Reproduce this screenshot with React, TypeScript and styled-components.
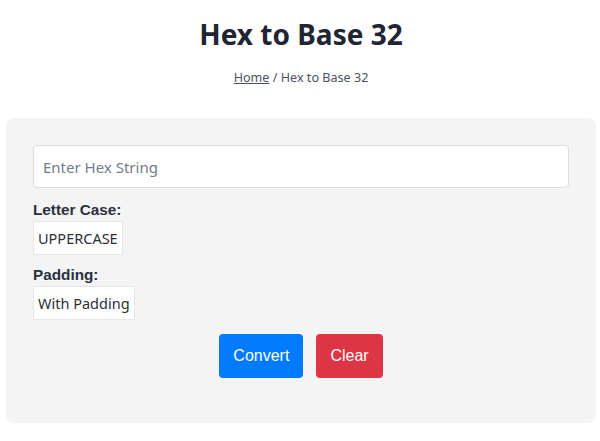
import React from "react";
import styled, { createGlobalStyle } from "styled-components";

const Global = createGlobalStyle`
  html, body { margin: 0; padding: 0; background: #ffffff; }
  body { font-family: "Noto Sans", "Open Sans", sans-serif; }
  * { box-sizing: border-box; }
`;

const Page = styled.div`
  width: 600px;
  padding: 0 4px 0 6px;
`;

const Header = styled.header`
  display: flex;
  flex-direction: column;
  align-items: center;
  padding-top: 14px;
`;

const Title = styled.h1`
  margin: 0;
  font-family: "Noto Sans", sans-serif;
  font-size: 28px;
  line-height: 40px;
  font-weight: 700;
  color: #1f2533;
`;

const Crumbs = styled.nav`
  margin-top: 15px;
  font-family: "Noto Sans", sans-serif;
  font-size: 12.6px;
  line-height: 18px;
  color: #4a5160;
`;

const CrumbLink = styled.a`
  color: #4a5160;
  text-decoration: underline;
`;

const Card = styled.section`
  margin-top: 31px;
  background: #f4f4f4;
  border-radius: 8px;
  padding: 27px 27px 45px 27px;
  display: flex;
  flex-direction: column;
`;

const TextInput = styled.input`
  width: 100%;
  height: 43px;
  border: 1px solid #dcdcdc;
  border-radius: 4px;
  background: #ffffff;
  padding: 0 9px;
  font-family: "Noto Sans", sans-serif;
  font-size: 15px;
  color: #333;
  outline: none;
  &::placeholder { color: #737c8c; }
`;

const Field = styled.div<{ $gap: number }>`
  margin-top: ${(p) => p.$gap}px;
  display: flex;
  flex-direction: column;
  align-items: flex-start;
`;

const Label = styled.label`
  font-family: "Liberation Sans", Arial, sans-serif;
  font-weight: 700;
  font-size: 15.3px;
  line-height: 18px;
  color: #2b3140;
  margin-bottom: 2px;
`;

const Select = styled.select`
  appearance: none;
  -webkit-appearance: none;
  height: 34px;
  border: 1px solid #e6e6e6;
  border-radius: 0;
  background: #ffffff;
  padding: 0 4px;
  font-family: "Noto Sans", sans-serif;
  font-size: 14.5px;
  color: #2b2f38;
  outline: none;
`;

const Actions = styled.div`
  margin-top: 14px;
  display: flex;
  justify-content: center;
  gap: 13px;
`;

const Button = styled.button<{ $tone: "primary" | "danger" }>`
  height: 44px;
  padding: 0 14px;
  border: none;
  border-radius: 4px;
  background: ${(p) => (p.$tone === "primary" ? "#007bff" : "#dc3545")};
  color: #ffffff;
  font-family: "Liberation Sans", Arial, sans-serif;
  font-size: 16px;
  cursor: pointer;
`;

export default function App() {
  return (
    <>
      <Global />
      <Page>
        <Header>
          <Title>Hex to Base 32</Title>
          <Crumbs>
            <CrumbLink href="#">Home</CrumbLink> / Hex to Base 32
          </Crumbs>
        </Header>
        <Card>
          <TextInput placeholder="Enter Hex String" />
          <Field $gap={13}>
            <Label>Letter Case:</Label>
            <Select defaultValue="upper">
              <option value="upper">UPPERCASE</option>
              <option value="lower">lowercase</option>
            </Select>
          </Field>
          <Field $gap={11}>
            <Label>Padding:</Label>
            <Select defaultValue="with">
              <option value="with">With Padding</option>
              <option value="without">No Padding</option>
            </Select>
          </Field>
          <Actions>
            <Button $tone="primary">Convert</Button>
            <Button $tone="danger">Clear</Button>
          </Actions>
        </Card>
      </Page>
    </>
  );
}
